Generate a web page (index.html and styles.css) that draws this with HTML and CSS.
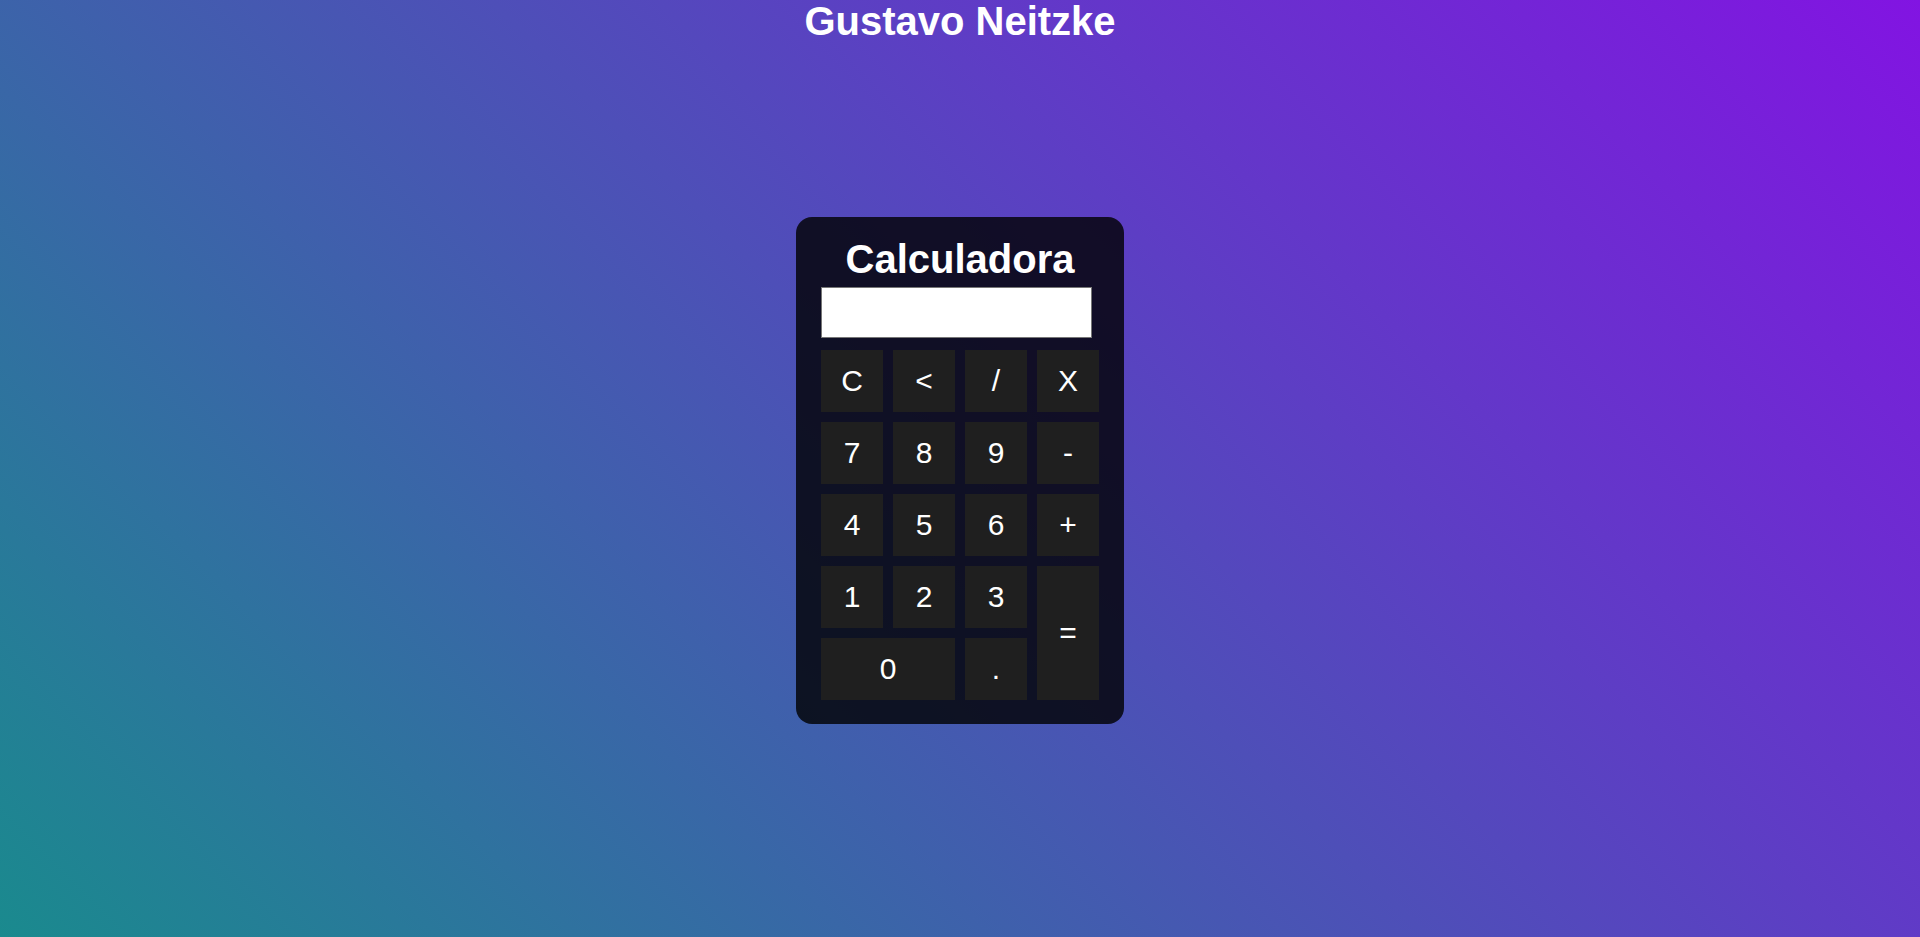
FILE: index.html
```html
<!DOCTYPE html>
<html lang="pt-BR">
<head>
<meta charset="UTF-8">
<title>Calculadora</title>
<link rel="stylesheet" href="styles.css">
</head>
<body>
  <h1 class="page-title">Gustavo Neitzke</h1>
  <main class="calculator">
    <h2 class="calc-title">Calculadora</h2>
    <input class="display" type="text" readonly>
    <div class="keys">
      <button class="key">C</button>
      <button class="key">&lt;</button>
      <button class="key">/</button>
      <button class="key">X</button>
      <button class="key">7</button>
      <button class="key">8</button>
      <button class="key">9</button>
      <button class="key">-</button>
      <button class="key">4</button>
      <button class="key">5</button>
      <button class="key">6</button>
      <button class="key">+</button>
      <button class="key">1</button>
      <button class="key">2</button>
      <button class="key">3</button>
      <button class="key key-equals">=</button>
      <button class="key key-zero">0</button>
      <button class="key">.</button>
    </div>
  </main>
</body>
</html>
```

FILE: styles.css
```css
* {
  box-sizing: border-box;
}

html, body {
  margin: 0;
  padding: 0;
}

body {
  min-height: 100vh;
  background: linear-gradient(45deg, #1a8a8e 0%, #8214e2 100%);
  font-family: "Liberation Sans", Arial, sans-serif;
  color: #fff;
  display: flex;
  flex-direction: column;
  align-items: center;
}

.page-title {
  margin: 0;
  font-size: 40px;
  font-weight: bold;
  line-height: 42px;
  text-align: center;
}

.calculator {
  margin-top: 175px;
  width: 328px;
  padding: 19px 25px 24px;
  background: rgba(0, 0, 0, 0.8);
  border-radius: 16px;
  display: flex;
  flex-direction: column;
  align-items: flex-start;
}

.calc-title {
  align-self: stretch;
  margin: 0;
  font-size: 40px;
  font-weight: bold;
  line-height: 46px;
  text-align: center;
}

.display {
  margin-top: 5px;
  width: 271px;
  height: 51px;
  border: 1px solid #767676;
  background: #fff;
  padding: 0 8px;
  font-family: inherit;
  font-size: 24px;
}

.keys {
  margin-top: 12px;
  display: grid;
  grid-template-columns: repeat(4, 62px);
  grid-auto-rows: 62px;
  gap: 10px;
}

.key {
  border: none;
  background: #1f1f1f;
  color: #fff;
  font-family: inherit;
  font-size: 30px;
  padding: 0;
}

.key-equals {
  grid-column: 4;
  grid-row: 4 / span 2;
}

.key-zero {
  grid-column: 1 / span 2;
}
```
